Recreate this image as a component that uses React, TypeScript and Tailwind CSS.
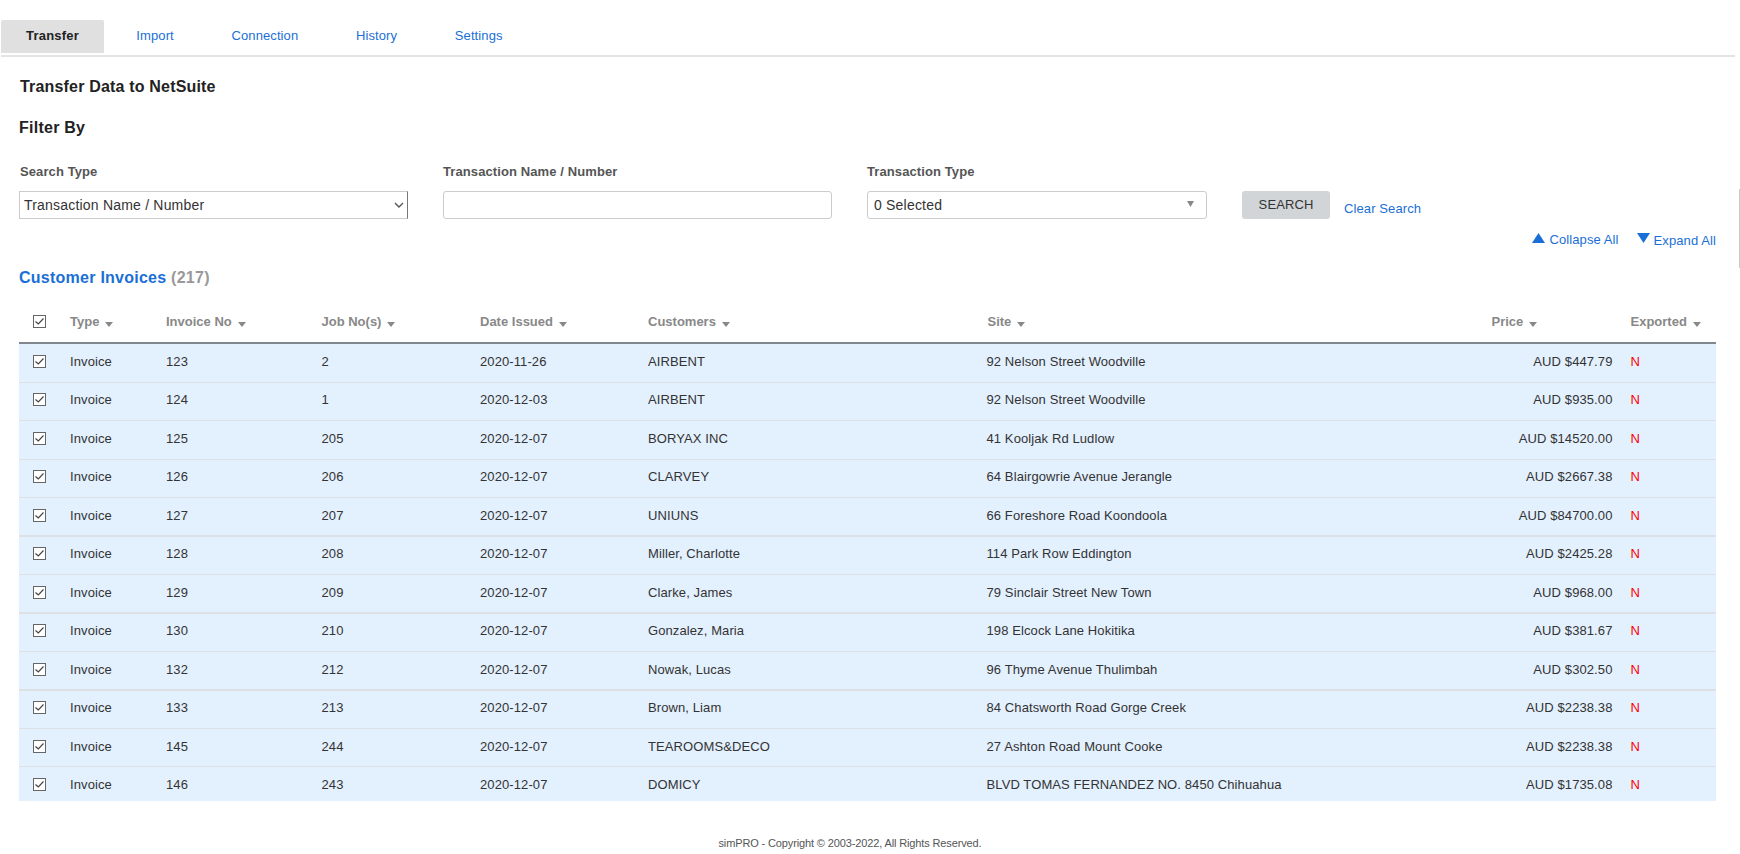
const tabs = ['Import', 'Connection', 'History', 'Settings']

const cols = 'grid grid-cols-[51px_96px_155.5px_158.5px_168px_339.5px_504px_139px_1fr]'

const headers = ['Type', 'Invoice No', 'Job No(s)', 'Date Issued', 'Customers', 'Site', 'Price', 'Exported']

const rows = [
  { no: '123', job: '2', date: '2020-11-26', customer: 'AIRBENT', site: '92 Nelson Street Woodville', price: 'AUD $447.79', h: 'h-[39px] border-b pt-[10px]' },
  { no: '124', job: '1', date: '2020-12-03', customer: 'AIRBENT', site: '92 Nelson Street Woodville', price: 'AUD $935.00', h: 'h-[38px] border-b pt-[9px]' },
  { no: '125', job: '205', date: '2020-12-07', customer: 'BORYAX INC', site: '41 Kooljak Rd Ludlow', price: 'AUD $14520.00', h: 'h-[39px] border-b pt-[10px]' },
  { no: '126', job: '206', date: '2020-12-07', customer: 'CLARVEY', site: '64 Blairgowrie Avenue Jerangle', price: 'AUD $2667.38', h: 'h-[38px] border-b pt-[9px]' },
  { no: '127', job: '207', date: '2020-12-07', customer: 'UNIUNS', site: '66 Foreshore Road Koondoola', price: 'AUD $84700.00', h: 'h-[39px] border-b-2 pt-[10px]' },
  { no: '128', job: '208', date: '2020-12-07', customer: 'Miller, Charlotte', site: '114 Park Row Eddington', price: 'AUD $2425.28', h: 'h-[38px] border-b pt-[9px]' },
  { no: '129', job: '209', date: '2020-12-07', customer: 'Clarke, James', site: '79 Sinclair Street New Town', price: 'AUD $968.00', h: 'h-[39px] border-b-2 pt-[10px]' },
  { no: '130', job: '210', date: '2020-12-07', customer: 'Gonzalez, Maria', site: '198 Elcock Lane Hokitika', price: 'AUD $381.67', h: 'h-[38px] border-b pt-[9px]' },
  { no: '132', job: '212', date: '2020-12-07', customer: 'Nowak, Lucas', site: '96 Thyme Avenue Thulimbah', price: 'AUD $302.50', h: 'h-[39px] border-b-2 pt-[10px]' },
  { no: '133', job: '213', date: '2020-12-07', customer: 'Brown, Liam', site: '84 Chatsworth Road Gorge Creek', price: 'AUD $2238.38', h: 'h-[38px] border-b pt-[9px]' },
  { no: '145', job: '244', date: '2020-12-07', customer: 'TEAROOMS&DECO', site: '27 Ashton Road Mount Cooke', price: 'AUD $2238.38', h: 'h-[38px] border-b pt-[10px]' },
  { no: '146', job: '243', date: '2020-12-07', customer: 'DOMICY', site: 'BLVD TOMAS FERNANDEZ NO. 8450 Chihuahua', price: 'AUD $1735.08', h: 'h-[34px] pt-[10px]' },
]

function Tick() {
  return (
    <span className="flex h-[13px] w-[13px] items-center justify-center border border-[#666] bg-white">
      <svg viewBox="0 0 11 11" className="h-[11px] w-[11px]" fill="none" stroke="#444" strokeWidth="1.2">
        <path d="M1.5 5.5 L4.3 8 L9.5 2.5" />
      </svg>
    </span>
  )
}

function SortArrow() {
  return (
    <svg viewBox="0 0 8 5" className="ml-[6px] mt-[8px] h-[5px] w-[8px]" fill="#888">
      <path d="M0 0 H8 L4 5 Z" />
    </svg>
  )
}

export default function App() {
  return (
    <div className="relative h-[854px] overflow-hidden bg-white text-[13px] leading-4 tracking-[0.1px] text-[#333] [font-family:'Liberation_Sans',Arial,sans-serif]">
      <div className="absolute right-0 top-[189px] h-[79px] w-px bg-[#ccc]" />

      <nav className="ml-[1px] mr-[5px] flex border-b-2 border-[#e4e4e4] pt-[20px]">
        <div className="mb-[2px] flex h-[33px] w-[103px] items-center justify-center rounded-t-[2px] bg-[#e0e0e0] pb-[1px] font-bold tracking-[0.2px] text-[#222]">
          Transfer
        </div>
        <div className="ml-[3.5px] flex">
          {tabs.map(t => (
            <a key={t} className="flex h-[33px] items-center px-[28.85px] pb-[1px] text-[#1a6fd6]">{t}</a>
          ))}
        </div>
      </nav>

      <main className="pl-[19px] pr-[24px]">
        <h1 className="ml-[1px] mt-[20px] text-[16px] font-bold leading-5 tracking-[0.18px] text-[#222]">Transfer Data to NetSuite</h1>
        <h2 className="mt-[21px] text-[16px] font-bold leading-5 tracking-[0.25px] text-[#222]">Filter By</h2>

        <div className="mt-[26px] flex items-end">
          <div className="w-[388.5px]">
            <label className="mb-[11px] ml-[1px] block font-bold text-[#555]">Search Type</label>
            <div className="relative">
              <select className="block h-[28px] w-full appearance-none border border-[#ccc] border-r-[#777] pl-[4px] text-[14px] tracking-[0.2px] text-[#333]">
                <option>Transaction Name / Number</option>
              </select>
              <svg viewBox="0 0 10 6" className="pointer-events-none absolute right-[4px] top-[11px] h-[6px] w-[10px]" fill="none" stroke="#555" strokeWidth="1.4">
                <path d="M1 1 L5 5 L9 1" />
              </svg>
            </div>
          </div>
          <div className="ml-[35.5px] w-[389px]">
            <label className="mb-[11px] block font-bold text-[#555]">Transaction Name / Number</label>
            <input className="block h-[28px] w-full rounded-[3px] border border-[#ccc]" />
          </div>
          <div className="ml-[35px] w-[339.5px]">
            <label className="mb-[11px] block font-bold text-[#555]">Transaction Type</label>
            <div className="flex h-[28px] items-center justify-between rounded-[3px] border border-[#ccc] pl-[6px] pr-[12px] text-[14px] tracking-[0.2px]">
              <span className="pb-[1px]">0 Selected</span>
              <svg viewBox="0 0 7 6" className="mb-[3px] h-[6px] w-[7px]" fill="#888"><path d="M0 0 H7 L3.5 6 Z" /></svg>
            </div>
          </div>
          <button className="ml-[35.5px] h-[28px] w-[88px] rounded-[3px] bg-[#d1d5d8] text-[#333]">SEARCH</button>
          <a className="mb-[2px] ml-[14px] text-[#1a6fd6]">Clear Search</a>
        </div>

        <div className="mt-[13px] flex justify-end text-[#1a6fd6]">
          <span className="flex items-start">
            <svg viewBox="0 0 13 10" className="mr-[4px] mt-[1px] h-[10px] w-[13px]" fill="#1a6fd6"><path d="M6.5 0 L13 10 H0 Z" /></svg>
            Collapse All
          </span>
          <span className="ml-[18px] flex items-start">
            <svg viewBox="0 0 13 10" className="mr-[4px] mt-[1px] h-[10px] w-[13px]" fill="#1a6fd6"><path d="M0 0 H13 L6.5 10 Z" /></svg>
            <span className="mt-[1px]">Expand All</span>
          </span>
        </div>

        <h3 className="mt-[19px] text-[16px] font-bold leading-5 tracking-[0.25px] text-[#1a6fd6]">
          Customer Invoices <span className="text-[#999]">(217)</span>
        </h3>

        <div className={`${cols} h-[56px] border-b-2 border-[#808890] pt-[26px] font-bold tracking-normal text-[#888]`}>
          <div className="pl-[14px] pt-[1px]"><Tick /></div>
          {headers.map(h => (
            <div key={h} className="flex items-start">{h}<SortArrow /></div>
          ))}
        </div>

        {rows.map(r => (
          <div key={r.no} className={`${cols} ${r.h} border-[#dde1e4] bg-[#e3f0fe]`}>
            <div className="pl-[14px] pt-[1px]"><Tick /></div>
            <div>Invoice</div>
            <div>{r.no}</div>
            <div>{r.job}</div>
            <div>{r.date}</div>
            <div>{r.customer}</div>
            <div className="-ml-[1px]">{r.site}</div>
            <div className="pr-[18px] text-right">{r.price}</div>
            <div className="text-[#f00]">N</div>
          </div>
        ))}

        <footer className="mt-[35px] w-[1662px] text-center text-[11px] leading-[14px] tracking-[-0.13px] text-[#555]">
          simPRO - Copyright © 2003-2022, All Rights Reserved.
        </footer>
      </main>
    </div>
  )
}
